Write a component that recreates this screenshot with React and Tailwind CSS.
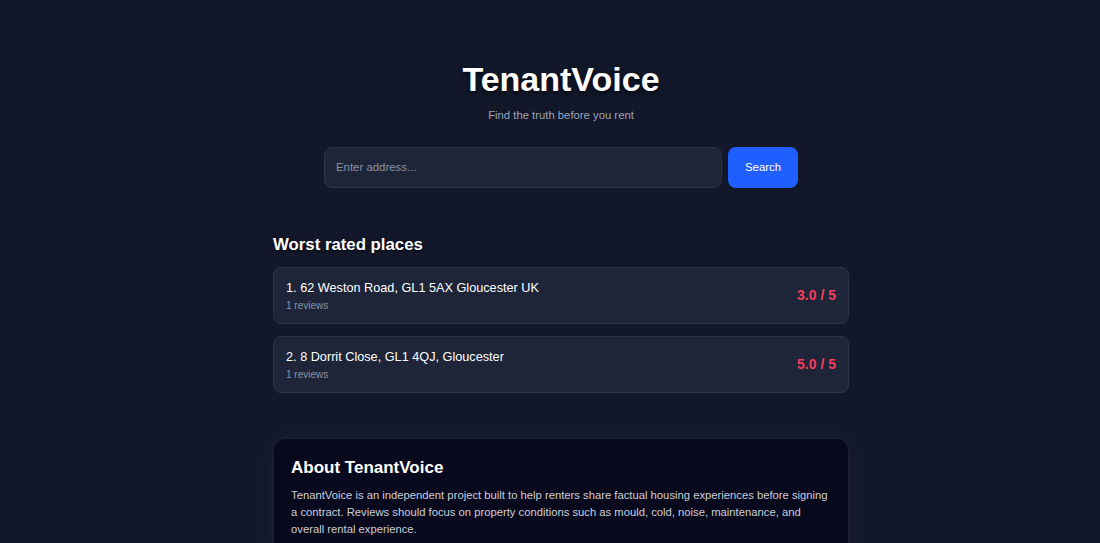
export default function App() {
  const places = [
    { name: "62 Weston Road, GL1 5AX Gloucester UK", reviews: 1, rating: "3.0" },
    { name: "8 Dorrit Close, GL1 4QJ, Gloucester", reviews: 1, rating: "5.0" },
  ];

  return (
    <div
      className="min-h-screen bg-[#121729] pl-[22px] text-white"
      style={{ fontFamily: '"Liberation Sans", Arial, sans-serif' }}
    >
      <div className="mx-auto w-[576px] pt-[59px] pb-10">
        {/* Header */}
        <div className="text-center">
          <h1 className="text-[34px] leading-[40px] font-bold [text-shadow:0_2px_4px_rgba(0,0,0,0.7)]">
            TenantVoice
          </h1>
          <p className="mt-[8px] text-[11.3px] text-[#9aa3b8]">Find the truth before you rent</p>
        </div>

        {/* Search */}
        <div className="mt-[23px] flex justify-center gap-[6px]">
          <input
            type="text"
            placeholder="Enter address..."
            className="w-[398px] h-[41px] rounded-lg border border-[#2d3448] bg-[#1e2538] px-[11px] text-[11.4px] text-white placeholder:text-[#8c93a5] focus:outline-none"
          />
          <button className="w-[70px] h-[41px] rounded-lg bg-[#1f5eff] text-[11.4px] text-white">
            Search
          </button>
        </div>

        {/* Worst rated */}
        <h2 className="mt-[44px] text-[16.8px] font-bold [text-shadow:0_1px_3px_rgba(0,0,0,0.6)]">
          Worst rated places
        </h2>
        <div className="mt-[10px] flex flex-col gap-[12px]">
          {places.map((p, i) => (
            <div
              key={i}
              className="flex h-[57px] items-center justify-between rounded-lg border border-[#2d3448] bg-[#1e2538] px-[12px]"
            >
              <div>
                <div className="text-[12.7px] leading-[18px]">
                  {i + 1}. {p.name}
                </div>
                <div className="mt-[1px] text-[10px] text-[#8c93a5]">{p.reviews} reviews</div>
              </div>
              <div className="text-[14px] font-bold text-[#f43f5e]">{p.rating} / 5</div>
            </div>
          ))}
        </div>

        {/* About */}
        <div className="mt-[45px] rounded-xl border border-[#1c2133] bg-[#09091d] px-[17px] pt-[16px] pb-6 shadow-[0_0_24px_rgba(40,48,80,0.45)]">
          <h3 className="text-[17px] leading-[26px] font-bold">About TenantVoice</h3>
          <p className="mt-[6px] text-[11.25px] leading-[17px] text-[#c9cdd8]">
            TenantVoice is an independent project built to help renters share factual housing experiences before signing
            a contract. Reviews should focus on property conditions such as mould, cold, noise, maintenance, and
            overall rental experience.
          </p>
        </div>
      </div>
    </div>
  );
}
